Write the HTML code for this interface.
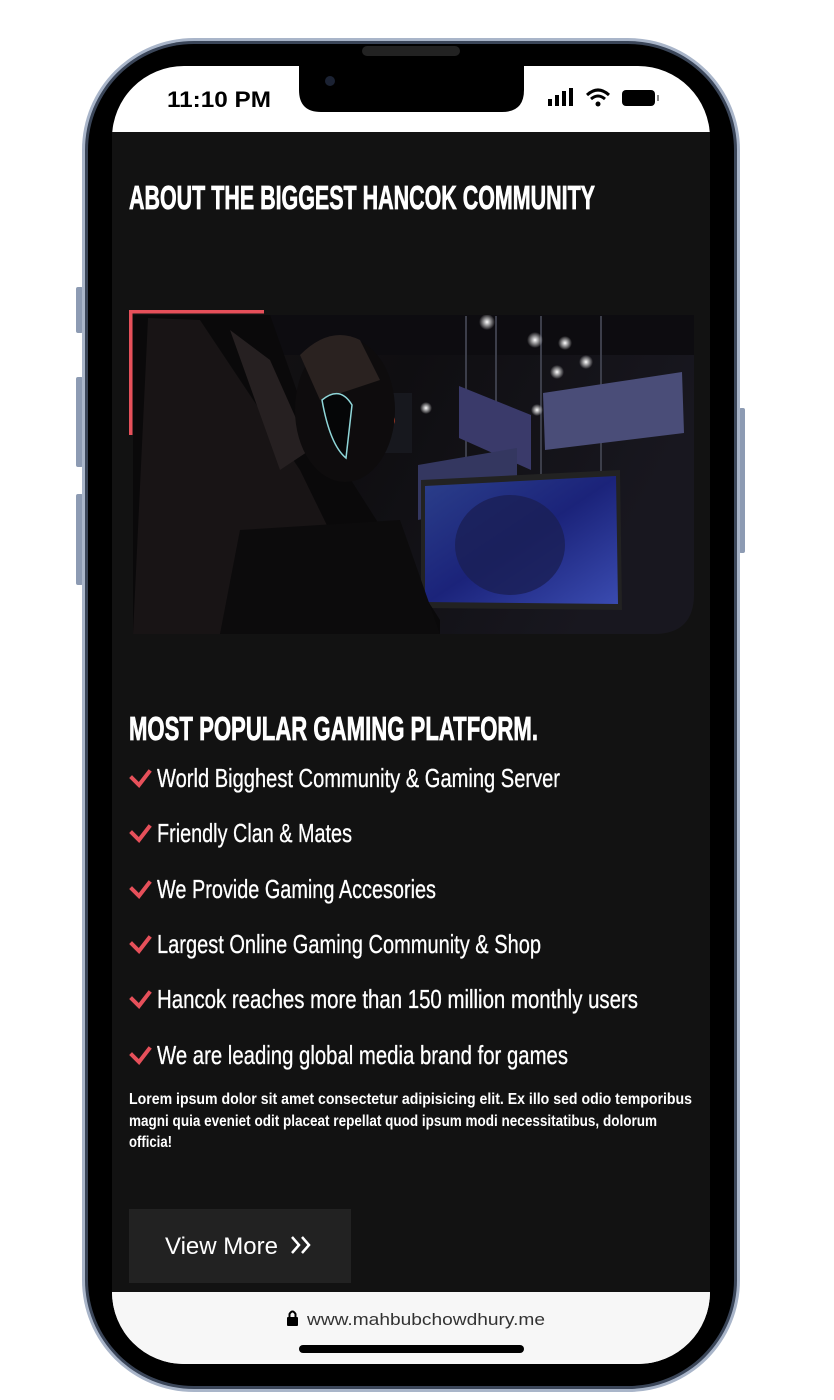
<!DOCTYPE html>
<html><head><meta charset="utf-8"><style>
html,body{margin:0;padding:0;background:#fff;width:834px;height:1400px;overflow:hidden}
svg{display:block}
</style></head><body>
<svg width="834" height="1400" viewBox="0 0 834 1400" xmlns="http://www.w3.org/2000/svg">
<defs>
<linearGradient id="bg" x1="0" y1="0" x2="1" y2="0.3">
<stop offset="0" stop-color="#151314"/><stop offset="0.5" stop-color="#0f0e11"/><stop offset="1" stop-color="#18171f"/>
</linearGradient>
<linearGradient id="scr" x1="0" y1="0" x2="1" y2="1">
<stop offset="0" stop-color="#2b3f8a"/><stop offset="0.5" stop-color="#1b237a"/><stop offset="1" stop-color="#3a4bb0"/>
</linearGradient>
<clipPath id="imgc"><path d="M133 315 H694 V594 Q694 634 654 634 H133 Z"/></clipPath>
<radialGradient id="glow" cx="0.5" cy="0.5" r="0.5"><stop offset="0" stop-color="#fff"/><stop offset="1" stop-color="#fff" stop-opacity="0"/></radialGradient>
</defs>
<rect x="76" y="287" width="7" height="46" rx="2" fill="#8d9bb3"/>
<rect x="76" y="377" width="7" height="90" rx="2" fill="#8d9bb3"/>
<rect x="76" y="494" width="7" height="91" rx="2" fill="#8d9bb3"/>
<rect x="739" y="408" width="6" height="145" rx="2" fill="#8d9bb3"/>
<rect x="82" y="38" width="658" height="1354" rx="112" fill="#a9b5c9"/>
<rect x="85" y="41" width="652" height="1348" rx="109" fill="#3b4659"/>
<rect x="88" y="44" width="646" height="1342" rx="106" fill="#000"/>
<rect x="112" y="66" width="598" height="1298" rx="72" fill="#fff"/>
<path d="M112 1292 H710 A72 72 0 0 1 638 1364 H184 A72 72 0 0 1 112 1292 Z" fill="#f7f7f7"/>
<rect x="112" y="132" width="598" height="1160" fill="#121212"/>
<path d="M299 66 H524 V90 Q524 112 502 112 H321 Q299 112 299 90 Z" fill="#000"/>
<rect x="362" y="46" width="98" height="10" rx="5" fill="#222"/>
<circle cx="330" cy="81" r="5" fill="#1b2233"/>
<text x="167" y="107" font-family="Liberation Sans, sans-serif" font-weight="bold" font-size="22" fill="#000" textLength="104" lengthAdjust="spacingAndGlyphs">11:10 PM</text>
<rect x="548" y="99" width="4" height="7" fill="#000"/><rect x="555" y="95" width="4" height="11" fill="#000"/><rect x="562" y="91" width="4" height="15" fill="#000"/><rect x="569" y="88" width="4" height="18" fill="#000"/>
<path d="M587 95 Q598 85 609 95" stroke="#000" stroke-width="3" fill="none"/><path d="M591 99 Q598 93 605 99" stroke="#000" stroke-width="3" fill="none"/><circle cx="598" cy="104" r="2.5" fill="#000"/>
<rect x="622" y="90" width="33" height="16" rx="4" fill="#000"/><rect x="657" y="95" width="2" height="6" fill="#888"/>
<text x="129" y="209" font-family="Liberation Sans, sans-serif" font-weight="bold" font-size="33" fill="#fff" stroke="#fff" stroke-width="0.8" textLength="466" lengthAdjust="spacingAndGlyphs">ABOUT THE BIGGEST HANCOK COMMUNITY</text>
<g clip-path="url(#imgc)">
<rect x="133" y="315" width="561" height="319" fill="url(#bg)"/>
<rect x="133" y="315" width="561" height="40" fill="#0d0c10"/>
<g fill="#3c3e4a"><rect x="465" y="316" width="2" height="200"/><rect x="495" y="316" width="2" height="200"/><rect x="540" y="316" width="2" height="200"/><rect x="600" y="316" width="2" height="200"/></g>
<circle cx="487" cy="322" r="8" fill="url(#glow)"/><circle cx="535" cy="340" r="8" fill="url(#glow)"/><circle cx="565" cy="343" r="7" fill="url(#glow)"/><circle cx="586" cy="362" r="7" fill="url(#glow)"/><circle cx="557" cy="372" r="7" fill="url(#glow)"/><circle cx="426" cy="408" r="6" fill="url(#glow)"/><circle cx="537" cy="410" r="6" fill="url(#glow)"/>
<path d="M459 386 L531 415 L531 470 L459 438 Z" fill="#3a3a6a"/>
<path d="M543 393 L682 372 L684 433 L545 450 Z" fill="#4a4d78"/>
<path d="M418 465 L517 448 L517 500 L418 520 Z" fill="#343760"/>
<rect x="362" y="393" width="50" height="60" fill="#17181e"/><circle cx="387" cy="420" r="8" fill="#e24a2e"/>
<path d="M421 480 L620 470 L622 610 L421 608 Z" fill="#222"/>
<path d="M425 486 L616 476 L618 604 L425 602 Z" fill="url(#scr)"/>
<ellipse cx="510" cy="545" rx="55" ry="50" fill="#1a1f55" opacity="0.8"/>
<path d="M198 315 L270 315 L300 400 L440 620 L440 634 L133 634 L133 315 Z" fill="#0a090a"/>
<path d="M148 318 L200 320 L300 470 L380 634 L133 634 Z" fill="#181415"/>
<path d="M230 330 L270 360 L310 450 L280 470 Z" fill="#262021"/>
<ellipse cx="345" cy="410" rx="50" ry="72" fill="#0e0c0d"/>
<path d="M300 355 Q330 325 360 340 L380 380 L320 400 Z" fill="#2a2220"/>
<path d="M322 400 Q340 385 352 405 L346 458 Q330 445 322 400 Z" fill="#050607" stroke="#8fd6d8" stroke-width="1.5"/>
<path d="M240 530 L400 520 L440 634 L220 634 Z" fill="#0c0b0c"/>
</g>
<rect x="129" y="310" width="135" height="3.5" fill="#e6505a"/>
<rect x="129" y="310" width="3.5" height="125" fill="#e6505a"/>
<text x="129" y="740" font-family="Liberation Sans, sans-serif" font-weight="bold" font-size="33" fill="#fff" stroke="#fff" stroke-width="0.8" textLength="409" lengthAdjust="spacingAndGlyphs">MOST POPULAR GAMING PLATFORM.</text>
<g font-family="Liberation Sans, sans-serif" font-size="26" fill="#fff" stroke="#fff" stroke-width="0.3">
<text x="157" y="787" textLength="403" lengthAdjust="spacingAndGlyphs">World Bigghest Community &amp; Gaming Server</text>
<text x="157" y="842" textLength="195" lengthAdjust="spacingAndGlyphs">Friendly Clan &amp; Mates</text>
<text x="157" y="898" textLength="279" lengthAdjust="spacingAndGlyphs">We Provide Gaming Accesories</text>
<text x="157" y="953" textLength="384" lengthAdjust="spacingAndGlyphs">Largest Online Gaming Community &amp; Shop</text>
<text x="157" y="1008" textLength="481" lengthAdjust="spacingAndGlyphs">Hancok reaches more than 150 million monthly users</text>
<text x="157" y="1064" textLength="411" lengthAdjust="spacingAndGlyphs">We are leading global media brand for games</text>
</g>
<g stroke="#e6505a" stroke-width="4" fill="none" stroke-linecap="square">
<path d="M132 778 L139 785 L149 772"/><path d="M132 833 L139 840 L149 827"/><path d="M132 889 L139 896 L149 883"/><path d="M132 944 L139 951 L149 938"/><path d="M132 999 L139 1006 L149 993"/><path d="M132 1055 L139 1062 L149 1049"/>
</g>
<g font-family="Liberation Sans, sans-serif" font-weight="bold" font-size="16" fill="#fff">
<text x="129" y="1104" textLength="563" lengthAdjust="spacingAndGlyphs">Lorem ipsum dolor sit amet consectetur adipisicing elit. Ex illo sed odio temporibus</text>
<text x="129" y="1126" textLength="528" lengthAdjust="spacingAndGlyphs">magni quia eveniet odit placeat repellat quod ipsum modi necessitatibus, dolorum</text>
<text x="129" y="1147" textLength="43" lengthAdjust="spacingAndGlyphs">officia!</text>
</g>
<rect x="129" y="1209" width="222" height="74" fill="#222"/>
<text x="165" y="1254" font-family="Liberation Sans, sans-serif" font-size="24" fill="#fff" textLength="113" lengthAdjust="spacingAndGlyphs">View More</text>
<path d="M292 1237 L299 1245 L292 1253 M302 1237 L309 1245 L302 1253" stroke="#fff" stroke-width="2.5" fill="none"/>
<rect x="287" y="1317" width="11" height="9" rx="1" fill="#000"/>
<path d="M289.5 1318 V1314 Q292.5 1309 295.5 1314 V1318" stroke="#000" stroke-width="2" fill="none"/>
<text x="307" y="1325" font-family="Liberation Sans, sans-serif" font-size="17" fill="#333" textLength="238" lengthAdjust="spacingAndGlyphs">www.mahbubchowdhury.me</text>
<rect x="299" y="1345" width="225" height="8" rx="4" fill="#000"/>
</svg>
</body></html>
